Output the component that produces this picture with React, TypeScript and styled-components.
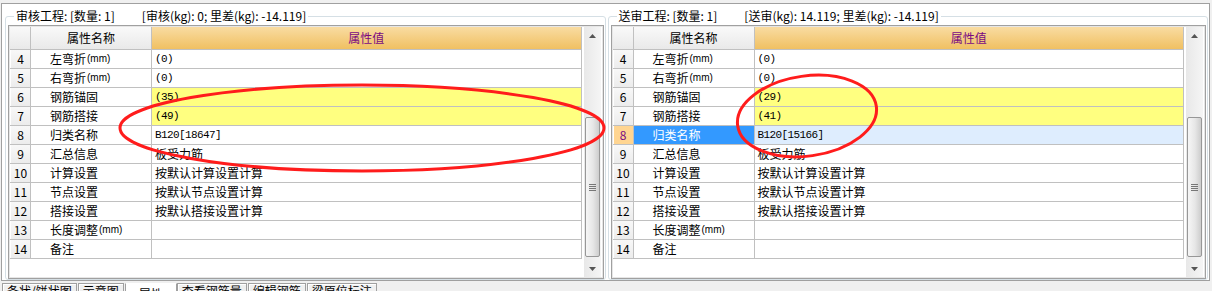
import React from "react";
import styled, { createGlobalStyle, css } from "styled-components";

type Mark = "none" | "warn" | "current";

interface PropRow {
  no: number;
  name: string;
  unit?: string;
  value: string;
  mark?: Mark;
}

interface PanelData {
  title: string;
  summary: string;
  rows: PropRow[];
}

const makeRows = (anchor: string, lap: string, code: string, current: boolean): PropRow[] => [
  { no: 4, name: "左弯折", unit: "(mm)", value: "(0)" },
  { no: 5, name: "右弯折", unit: "(mm)", value: "(0)" },
  { no: 6, name: "钢筋锚固", value: anchor, mark: "warn" },
  { no: 7, name: "钢筋搭接", value: lap, mark: "warn" },
  { no: 8, name: "归类名称", value: code, mark: current ? "current" : "none" },
  { no: 9, name: "汇总信息", value: "板受力筋" },
  { no: 10, name: "计算设置", value: "按默认计算设置计算" },
  { no: 11, name: "节点设置", value: "按默认节点设置计算" },
  { no: 12, name: "搭接设置", value: "按默认搭接设置计算" },
  { no: 13, name: "长度调整", unit: "(mm)", value: "" },
  { no: 14, name: "备注", value: "" },
];

const panels: PanelData[] = [
  {
    title: "审核工程: [数量: 1]",
    summary: "[审核(kg): 0; 里差(kg): -14.119]",
    rows: makeRows("(35)", "(49)", "B120[18647]", false),
  },
  {
    title: "送审工程: [数量: 1]",
    summary: "[送审(kg): 14.119; 里差(kg): -14.119]",
    rows: makeRows("(29)", "(41)", "B120[15166]", true),
  },
];

const tabs = ["条状/饼状图", "示意图", "属性", "查看钢筋量", "编辑钢筋", "梁原位标注"];
const activeTab = "属性";

const GlobalStyle = createGlobalStyle`
  html, body { margin: 0; padding: 0; background: #f0f0f0; }
  body {
    font-family: "Noto Sans CJK SC", "Liberation Sans", sans-serif;
    font-size: 12px;
    color: #000;
  }
  * { box-sizing: border-box; }
`;

const Screen = styled.div`
  position: relative;
  width: 1212px;
  height: 291px;
  overflow: hidden;
  padding-top: 3px;
  background: #f0f0f0;
`;

const Window = styled.div`
  margin-left: 1px;
  width: 1209px;
  height: 278px;
  background: #fff;
  border: 1px solid #a0a0a0;
  display: flex;
  gap: 2px;
  padding: 0 1px 0 3px;
`;

const GroupBox = styled.fieldset`
  flex: 1;
  min-width: 0;
  margin: 4px 0 0 0;
  padding: 0 1px 0 2px;
  border: 1px solid #d5dfe5;
  border-radius: 3px;
  display: flex;
  flex-direction: column;
`;

const Caption = styled.legend`
  margin-left: 6px;
  padding: 0 2px;
  line-height: 16px;
  white-space: nowrap;
`;

const Summary = styled.span`
  margin-left: 27px;
`;

const GridFrame = styled.div`
  flex: 1;
  margin-top: 1px;
  display: flex;
  border: 1px solid #a0a0a0;
  box-shadow: inset 0 0 0 1px #e6e6e6;
  padding: 1px 2px 1px 1px;
  background: #fff;
`;

const Sheet = styled.div`
  flex: 1;
  display: flex;
  flex-direction: column;
`;

const SheetRow = styled.div<{ $head?: boolean }>`
  display: grid;
  grid-template-columns: 21px 121px 1fr;
  height: ${p => (p.$head ? 23 : 19)}px;
`;

const cellBase = css`
  border-right: 1px solid #c0c0c0;
  border-bottom: 1px solid #c0c0c0;
  display: flex;
  align-items: center;
  white-space: nowrap;
  overflow: hidden;
  line-height: 18px;
`;

const HeadCell = styled.div<{ $accent?: boolean }>`
  ${cellBase}
  justify-content: center;
  background: ${p =>
    p.$accent
      ? "linear-gradient(#f9dca2, #f0c062)"
      : "linear-gradient(#f9f9f9, #e9e9e9)"};
  color: ${p => (p.$accent ? "#7a0a82" : "#000")};
`;

const RowNo = styled.div<{ $mark?: Mark }>`
  ${cellBase}
  justify-content: center;
  text-align: center;
  padding-left: 1px;
  background: ${p =>
    p.$mark === "current" ? "#ffd591" : "linear-gradient(#f8f8f8, #ececec)"};
  color: ${p => (p.$mark === "current" ? "#7a0a82" : "#000")};
  box-shadow: inset 1px 0 0 #fff;
`;

const NameCell = styled.div<{ $mark?: Mark }>`
  ${cellBase}
  padding-left: 19px;
  background: ${p => (p.$mark === "current" ? "#3399ff" : "#fff")};
  color: ${p => (p.$mark === "current" ? "#fff" : "#000")};
`;

const Unit = styled.span`
  margin-left: 1px;
  font-family: "Liberation Sans", sans-serif;
  font-size: 10px;
`;

const ValueCell = styled.div<{ $mark?: Mark }>`
  ${cellBase}
  padding-left: 3px;
  background: ${p =>
    p.$mark === "warn" ? "#ffff80" : p.$mark === "current" ? "#deedfe" : "#fff"};
`;

const Code = styled.span`
  font-family: "Liberation Mono", monospace;
  font-size: 11px;
  letter-spacing: -0.6px;
`;

const ScrollBar = styled.div`
  width: 17px;
  margin-left: 2px;
  display: flex;
  flex-direction: column;
  background: linear-gradient(to right, #e8e8e8, #f5f5f5);
`;

const ScrollButton = styled.div`
  height: 17px;
  display: flex;
  align-items: center;
  justify-content: center;
`;

const Track = styled.div`
  flex: 1;
  display: flex;
  flex-direction: column;
  padding-top: 73px;
`;

const Thumb = styled.div`
  height: 140px;
  margin: 0 1px;
  border: 1px solid #979797;
  border-radius: 2px;
  background: linear-gradient(to right, #f6f6f6, #e6e6e6 55%, #cdcdcd);
  display: flex;
  align-items: center;
  justify-content: center;
`;

const TabStrip = styled.div`
  display: flex;
  margin-top: 2px;
  padding-left: 2px;
  height: 12px;
`;

const Tab = styled.div<{ $active?: boolean }>`
  padding: ${p => (p.$active ? "3px 13px 0" : "0 4px")};
  margin-right: ${p => (p.$active ? 0 : 1)}px;
  border: 1px solid #a0a0a0;
  border-bottom: none;
  border-top-color: ${p => (p.$active ? "transparent" : "#a0a0a0")};
  background: ${p => (p.$active ? "#fff" : "#f0f0f0")};
  box-shadow: ${p => (p.$active ? "none" : "inset 1px 1px 0 #fff")};
  line-height: 14px;
  white-space: nowrap;
`;

const Annotations = styled.svg`
  position: absolute;
  left: 0;
  top: 0;
  pointer-events: none;
`;

const isAscii = (s: string) => /^[\x00-\x7f]*$/.test(s);

const Arrow: React.FC<{ down?: boolean }> = ({ down }) => (
  <svg width="7" height="4" viewBox="0 0 7 4">
    <polygon points={down ? "0,0 7,0 3.5,4" : "0,4 7,4 3.5,0"} fill="#555" />
  </svg>
);

const Grip = () => (
  <svg width="7" height="7" viewBox="0 0 7 7">
    {[0, 2, 4, 6].map(y => (
      <rect key={y} x="0" y={y} width="7" height="1" fill="#777" />
    ))}
  </svg>
);

const PropertyPanel: React.FC<{ data: PanelData }> = ({ data }) => (
  <GroupBox>
    <Caption>
      {data.title}
      <Summary>{data.summary}</Summary>
    </Caption>
    <GridFrame>
      <Sheet>
        <SheetRow $head>
          <HeadCell />
          <HeadCell>属性名称</HeadCell>
          <HeadCell $accent>属性值</HeadCell>
        </SheetRow>
        {data.rows.map(row => (
          <SheetRow key={row.no}>
            <RowNo $mark={row.mark}>{row.no}</RowNo>
            <NameCell $mark={row.mark}>
              {row.name}
              {row.unit && <Unit>{row.unit}</Unit>}
            </NameCell>
            <ValueCell $mark={row.mark}>
              {row.value && isAscii(row.value) ? <Code>{row.value}</Code> : row.value}
            </ValueCell>
          </SheetRow>
        ))}
      </Sheet>
      <ScrollBar>
        <ScrollButton>
          <Arrow />
        </ScrollButton>
        <Track>
          <Thumb>
            <Grip />
          </Thumb>
        </Track>
        <ScrollButton>
          <Arrow down />
        </ScrollButton>
      </ScrollBar>
    </GridFrame>
  </GroupBox>
);

export default function App() {
  return (
    <Screen>
      <GlobalStyle />
      <Window>
        {panels.map(p => (
          <PropertyPanel key={p.title} data={p} />
        ))}
      </Window>
      <TabStrip>
        {tabs.map(t => (
          <Tab key={t} $active={t === activeTab}>
            {t}
          </Tab>
        ))}
      </TabStrip>
      <Annotations width="1212" height="291" viewBox="0 0 1212 291">
        <ellipse cx="362" cy="128" rx="242" ry="43" fill="none" stroke="#ff1c1c" strokeWidth="3" />
        <ellipse
          cx="807"
          cy="116"
          rx="70"
          ry="40"
          fill="none"
          stroke="#ff1c1c"
          strokeWidth="3"
          transform="rotate(-8 807 116)"
        />
      </Annotations>
    </Screen>
  );
}
